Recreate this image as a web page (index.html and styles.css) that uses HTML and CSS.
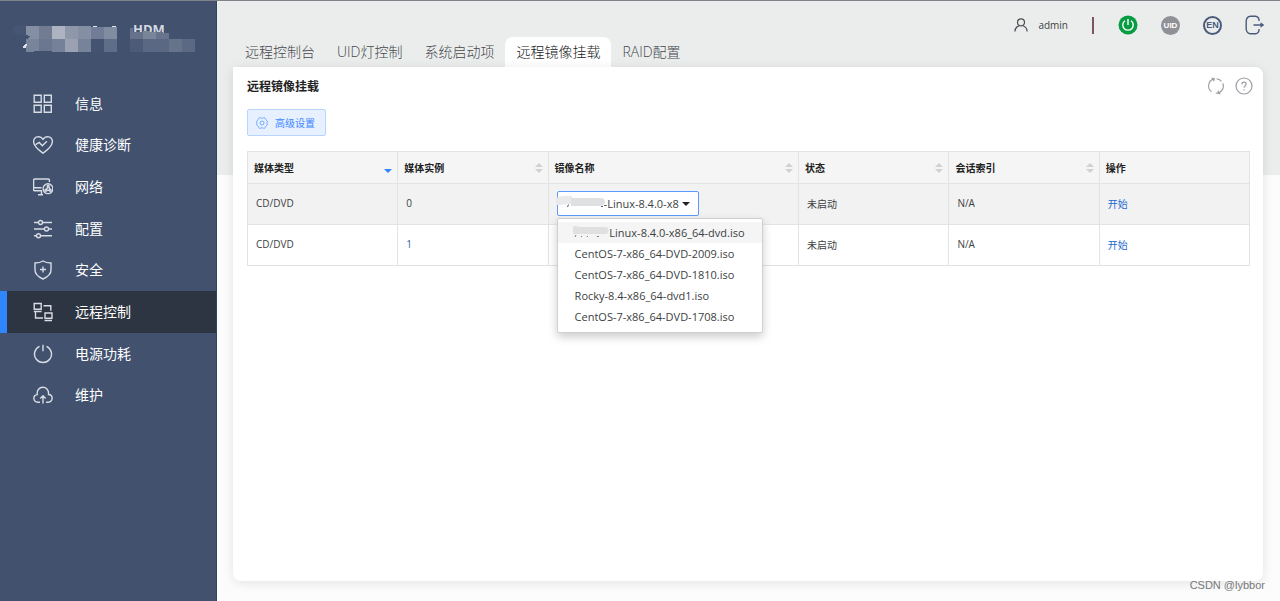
FILE: index.html
```
<!DOCTYPE html>
<html lang="zh-CN">
<head>
<meta charset="utf-8">
<title>HDM - 远程镜像挂载</title>
<link rel="stylesheet" href="styles.css">
</head>
<body>
<div class="app">
  <aside class="sidebar">
    <div class="brand">
      <span class="brand-name">HDM</span>
      <svg class="brand-mask" width="200" height="36" viewBox="0 20 200 36" shape-rendering="crispEdges" aria-hidden="true">
        <path fill="#465572" d="M13 26h13v10l-13-3z"/>
        <path fill="#858fa3" d="M26 26h13v13H28l2-3-4-1z"/><path fill="#717c93" d="M39 26h13v13H39z"/><path fill="#adb3c0" d="M52 26h13v13H52z"/><path fill="#8f98aa" d="M65 26h13v13H65z"/><path fill="#848fa3" d="M78 26h13v13H78z"/><path fill="#717d96" d="M91 27h13v12H91z"/><path fill="#818ca1" d="M104 27h13v12h-13z"/>
        <path fill="#78849a" d="M26 39h13v12h-4l-3 1h-6z"/><path fill="#6b7790" d="M39 39h13v12H39z"/><path fill="#758198" d="M52 39h13v13H52z"/><path fill="#99a1b2" d="M65 39h13v13H65z"/><path fill="#77839a" d="M78 39h13v13H78z"/><path fill="#445371" d="M91 39h13v13H91z"/><path fill="#606d88" d="M104 39h13v13h-13z"/>
        <path fill="#415170" d="M130 33h39v6h-39z"/>
        <path fill="#66728a" d="M130 28h3v4h10v7h-13z"/><path fill="#7b8599" d="M143 31l13 1v7h-13z"/><path fill="#68748d" d="M156 32l13 1v6h-13z"/>
        <path fill="#4d5b78" d="M130 39h13v13h-13z"/><path fill="#5a6883" d="M143 39h26v13h-26z"/><path fill="#66738b" d="M169 39h13v13h-13z"/><path fill="#5c6984" d="M182 39h13v13h-13z"/>
        <path fill="#dfe3ea" d="M93 26h4v1h-4zM112 26h4v1h-4zM25 44h2v2h-1v2h-3v-2z"/>
      </svg>
    </div>
    <nav class="nav" aria-label="主导航">
      <a class="nav-item" href="#"><svg class="nav-icon" viewBox="0 0 20 20"><path d="M1.200 1.200h7v7h-7zM11.300 1.200h7v7h-7zM1.200 11.200h7v7h-7zM11.300 11.200h7v7h-7z"/></svg>信息</a>
      <a class="nav-item" href="#"><svg class="nav-icon" viewBox="0 0 20 20"><path d="M10 18.200C6.500 15.600 .6 11.400 .6 6.700.6 1.500 7.200-.1 10 4.300c2.800-4.400 9.400-2.800 9.400 2.400 0 4.700-5.900 8.900-9.400 11.500zM2.600 9.600l3.600-2.200 3.100 3.300 4.600-4.500"/></svg>健康诊断</a>
      <a class="nav-item" href="#"><svg class="nav-icon" viewBox="0 0 20 20"><path d="M9 13.800H1.600a1 1 0 0 1-1-1V3a1 1 0 0 1 1-1h13.800a1 1 0 0 1 1 1v2M.6 10.700h8M8.500 14v3.500M5 17.800h5"/><circle cx="15" cy="11.700" r="4.900"/><circle cx="15.200" cy="9.200" r="1"/><circle cx="12.900" cy="13.200" r="1"/><circle cx="17.200" cy="13.200" r="1"/><path d="M14.800 10.200l-1.400 2.200M15.700 10.200l1.200 2.200M13.900 13.400h2.300"/></svg>网络</a>
      <a class="nav-item" href="#"><svg class="nav-icon" viewBox="0 0 20 20"><path d="M1 3.500h4.500M9.500 3.500H19M1 10h10.500M15.500 10H19M1 16.800h2.500M7.500 16.800H19"/><circle cx="7.500" cy="3.500" r="2"/><circle cx="13.500" cy="10" r="2"/><circle cx="5.500" cy="16.800" r="2"/></svg>配置</a>
      <a class="nav-item" href="#"><svg class="nav-icon" viewBox="0 0 20 20"><path d="M10 1c2.300 1.500 5 2 8 2v7c0 4-3.500 7-8 9-4.500-2-8-5-8-9V3c3 0 5.700-.5 8-2zM10 6.500v6M7 9.500h6"/></svg>安全</a>
      <a class="nav-item active" href="#" aria-current="page"><svg class="nav-icon" viewBox="0 0 20 20"><path d="M1.200 1.500h7v5.800h-7zM.8 9.500h7.800M10.500 3.700h7.300v5M2.500 9.500v6.500h7.500M12 11h7v5.200h-7zM11.500 18.500H19"/></svg>远程控制</a>
      <a class="nav-item" href="#"><svg class="nav-icon" viewBox="0 0 20 20"><path d="M6.500 2.300a8.500 8.500 0 1 0 7 0M10 .8v6.500"/></svg>电源功耗</a>
      <a class="nav-item" href="#"><svg class="nav-icon" viewBox="0 0 20 20"><path d="M7 17.300H4.800C-.2 16.800-.5 10.300 4.300 9.600 2.800.3 16.500-.5 15.500 9.500c5 .3 4.700 7.300-.2 7.800H13M10 18.500v-7.200M7.300 13.500l2.700-2.700 2.700 2.700"/></svg>维护</a>
    </nav>
  </aside>

  <main class="main">
    <header class="topbar">
      <nav class="tabs" aria-label="远程控制">
        <a class="tab" href="#">远程控制台</a>
        <a class="tab" href="#">UID灯控制</a>
        <a class="tab" href="#">系统启动项</a>
        <a class="tab selected" href="#" aria-current="page">远程镜像挂载</a>
        <a class="tab" href="#">RAID配置</a>
      </nav>
      <div class="tools">
        <a class="user" href="#">
          <svg width="14" height="14" viewBox="0 0 14 14" fill="none" stroke="#4a4d52" stroke-width="1.200"><circle cx="7" cy="4.300" r="3.500"/><path d="M.9 13.600c0-3 1.700-5 4.300-5.900M13.100 13.600c0-3-1.700-5-4.300-5.900"/></svg>
          admin
        </a>
        <span class="divider"></span>
        <button class="tool" type="button" aria-label="电源"><svg width="20" height="20" viewBox="0 0 20 20"><circle cx="10" cy="10" r="9.500" fill="#079c41"/><path d="M7 5.700a5.200 5.200 0 1 0 6 0M10 4v6" fill="none" stroke="#fff" stroke-width="1.400"/></svg></button>
        <button class="tool badge uid" type="button">UID</button>
        <button class="tool badge lang" type="button">EN</button>
        <button class="tool" type="button" aria-label="退出"><svg width="20" height="20" viewBox="0 0 20 20" fill="none" stroke="#4b5b7c" stroke-width="1.400"><path d="M14 6V4.500Q13.500 1.500 10.500 1.200H5.500Q1.500 1.500 1.200 6v8q.3 4.300 4.300 4.800h5q3-.3 3.500-3.300V14M8.500 10H17"/><path d="M15.500 7.200l3.800 2.800-3.800 2.800z" fill="#4b5b7c" stroke="none"/></svg></button>
      </div>
    </header>

    <section class="panel">
      <div class="panel-head">
        <h1 class="title">远程镜像挂载</h1>
        <div class="panel-actions">
          <button class="tool" type="button" aria-label="刷新"><svg width="18" height="18" viewBox="0 0 18 18" fill="none" stroke="#9a9da3" stroke-width="1.100"><path d="M6.800 1.900A7.300 7.300 0 0 0 4.500 14.700M8.800 16.300A7.300 7.300 0 0 0 15.800 6.200M9.500 1.700a7.300 7.300 0 0 1 5 2.600M4.800 1.100l2.600.7-.9 2.500M13.300 16.900l-2.600-.7.900-2.500"/></svg></button>
          <button class="tool" type="button" aria-label="帮助"><svg width="18" height="18" viewBox="0 0 18 18" fill="none" stroke="#9a9da3" stroke-width="1.200"><circle cx="9" cy="9" r="8"/><path d="M6.900 7.200C6.900 4.300 11.200 4.400 11.200 7 11.200 8.700 9 8.700 9 10.700M9 12.200v1.300"/></svg></button>
        </div>
      </div>
      <button class="advanced" type="button"><svg width="12" height="12" viewBox="0 0 12 12" fill="none" stroke="#77adff" stroke-width="1"><path d="M3.300.7h1.200L6 1.400 7.500.7h1.200l1 1.900 1.400 1.200.4 1.200-.8 1 .8 1-.4 1.200-1.400 1.200-1 1.900H7.500L6 10.600l-1.500.7H3.300l-1-1.900L.9 8.200.5 7l.8-1-.8-1 .4-1.200 1.400-1.200z"/><circle cx="6" cy="6" r="2"/></svg>高级设置</button>

      <table class="grid">
        <thead>
          <tr>
            <th scope="col"><div class="th">媒体类型<span class="sort desc"></span></div></th>
            <th scope="col"><div class="th">媒体实例<span class="sort"></span></div></th>
            <th scope="col" class="wide"><div class="th">镜像名称<span class="sort"></span></div></th>
            <th scope="col"><div class="th">状态<span class="sort"></span></div></th>
            <th scope="col"><div class="th">会话索引<span class="sort"></span></div></th>
            <th scope="col"><div class="th">操作</div></th>
          </tr>
        </thead>
        <tbody>
          <tr class="current">
            <td>CD/DVD</td>
            <td>0</td>
            <td>
              <div class="picker">
                <select class="image-select open" aria-label="镜像名称 0"><option>-Linux-8.4.0-x8</option></select>
                <svg class="smudge" width="50" height="16" viewBox="0 0 50 16" aria-hidden="true"><path fill="#e9eaeb" d="M0 3q6-3 16-2v8l-16 1z"/><path fill="#dfe0e1" d="M15 3h29q5 0 5 4-1 4-6 4H15z"/><path stroke="#55585c" d="M11.500 12l1-2.500M45 11.500h2" fill="none"/></svg>
                <ul class="menu" role="listbox" aria-label="镜像名称">
                  <li class="option hover" role="option" aria-selected="true"><svg class="redacted" width="37" height="12" viewBox="0 0 37 12" aria-hidden="true"><path fill="#e0e0e1" d="M0 1q2-2 6 0h28q4 3 0 7H0z"/><path stroke="#777" fill="none" d="M2 11l1-2M8 10.500h1M14 10.500h1M24 10.500h2"/></svg>Linux-8.4.0-x86_64-dvd.iso</li>
                  <li class="option" role="option">CentOS-7-x86_64-DVD-2009.iso</li>
                  <li class="option" role="option">CentOS-7-x86_64-DVD-1810.iso</li>
                  <li class="option" role="option">Rocky-8.4-x86_64-dvd1.iso</li>
                  <li class="option" role="option">CentOS-7-x86_64-DVD-1708.iso</li>
                </ul>
              </div>
            </td>
            <td>未启动</td>
            <td>N/A</td>
            <td><a class="action" href="#">开始</a></td>
          </tr>
          <tr>
            <td>CD/DVD</td>
            <td class="instance">1</td>
            <td><div class="picker"><select class="image-select" aria-label="镜像名称 1"><option></option></select></div></td>
            <td>未启动</td>
            <td>N/A</td>
            <td><a class="action" href="#">开始</a></td>
          </tr>
        </tbody>
      </table>
    </section>
    <span class="watermark">CSDN @lybbor</span>
  </main>
</div>
</body>
</html>
```
FILE: styles.css
```
* { box-sizing: border-box; }

body {
  margin: 0;
  font-family: "Open Sans", "Noto Sans CJK SC", sans-serif;
  font-size: 10px;
  color: #3c3f43;
}

a { color: inherit; text-decoration: none; }
button { font: inherit; cursor: pointer; }

.app {
  display: flex;
  min-height: 100vh;
  border-top: 1px solid #7f8288;
}

.sidebar {
  flex: 0 0 217px;
  background: #41516e;
  border-right: 1px solid #33435f;
}

.brand { position: relative; height: 82px; }
.brand-name {
  position: absolute;
  left: 133px;
  top: 19px;
  font-size: 13px;
  line-height: 18px;
  font-weight: 700;
  color: #d5d9e0;
}
.brand-mask { position: absolute; left: 0; top: 19px; }

.nav {
  display: grid;
  grid-template-rows: repeat(8, 1fr);
  height: 333px;
}
.nav-item {
  display: flex;
  align-items: center;
  gap: 22px;
  padding-left: 33px;
  font-size: 14px;
  line-height: 20px;
  color: #fff;
}
.nav-item.active {
  padding-left: 26px;
  background: #2e3542;
  border-left: 7px solid #2f86ff;
}
.nav-icon {
  width: 20px;
  height: 20px;
  fill: none;
  stroke: #d8dce4;
  stroke-width: 1.4;
}

.main {
  position: relative;
  flex: 1;
  min-width: 0;
  display: flex;
  flex-direction: column;
  padding: 0 17px 20px 16px;
  background: linear-gradient(#ebeded 174px, #fcfcfc 174px);
}

.topbar {
  display: flex;
  justify-content: space-between;
  align-items: flex-start;
  height: 66px;
}
.tabs {
  display: flex;
  align-self: flex-end;
  padding-left: 1px;
}
.tab {
  padding: 5px 11px;
  border-radius: 8px 8px 0 0;
  font-size: 14px;
  line-height: 20px;
  font-weight: 300;
  color: #45484c;
}
.tab.selected { background: #fff; color: #222; }

.tools {
  display: flex;
  align-items: center;
  gap: 23px;
  margin-right: -2px;
  padding-top: 14px;
}
.user {
  display: flex;
  align-items: center;
  gap: 10px;
  font-size: 10px;
  line-height: 20px;
}
.divider { width: 2px; height: 17px; margin: 0 1px; background: #7d5560; }
.tool {
  display: flex;
  align-items: center;
  justify-content: center;
  padding: 0;
  border: 0;
  background: none;
}
.badge {
  width: 19px;
  height: 19px;
  border-radius: 50%;
  font-family: "Liberation Sans", sans-serif;
  font-weight: 700;
}
.uid { background: #8f9196; color: #fff; font-size: 8px; }
.lang { border: 2px solid #4b5b7c; color: #4b5b7c; font-size: 9px; }

.panel {
  flex: 1;
  padding: 9px 13px 20px 14px;
  border-radius: 0 8px 8px 8px;
  background: #fff;
  box-shadow: 0 2px 12px rgba(0, 0, 0, 0.1);
}
.panel-head {
  display: flex;
  align-items: center;
  justify-content: space-between;
  height: 20px;
  margin-right: -3px;
}
.title {
  margin: 0;
  padding-top: 2px;
  font-size: 12px;
  line-height: 20px;
  font-weight: 700;
  color: #222;
}
.panel-actions { display: flex; gap: 10px; }

.advanced {
  display: flex;
  align-items: center;
  gap: 7px;
  height: 27px;
  margin: 13px 0 15px;
  padding: 0 10px 0 8px;
  border: 1px solid #b9d5ff;
  border-radius: 2px;
  background: #e6f0ff;
  color: #3d87ff;
}

.grid {
  width: 100%;
  table-layout: fixed;
  border-collapse: collapse;
}
.grid th, .grid td {
  width: 15%;
  border: 1px solid #e2e3e5;
  text-align: left;
}
.grid th {
  height: 32px;
  padding: 0 5px 0 6px;
  background: #f5f5f5;
  color: #222;
  font-weight: 700;
}
.grid th.wide { width: 25%; }
.th { display: flex; align-items: center; justify-content: space-between; }
.grid td { height: 41px; padding: 0 8px 2px; }
.current { background: #f2f2f2; }
.instance { color: #2a6496; }
.action { color: #1c68cf; }

.sort { display: grid; gap: 2px; }
.sort::before, .sort::after {
  content: "";
  border: 4px solid transparent;
}
.sort::before { border-top: 0; border-bottom-color: #d0d1d3; }
.sort::after { border-bottom: 0; border-top-color: #d0d1d3; }
.sort.desc::before { border-bottom-color: transparent; }
.sort.desc::after { border-top-color: #2f86ff; }

.picker { position: relative; width: 142px; }
.image-select {
  display: block;
  appearance: none;
  width: 142px;
  height: 25px;
  padding: 0 0 0 46px;
  border: 1px solid #c9cbce;
  border-radius: 2px;
  background: #fff;
  font: inherit;
  font-size: 11px;
  color: #3c3f43;
}
.image-select.open { border-color: #5b9bff; }
.picker::after {
  content: "";
  position: absolute;
  right: 9px;
  top: 11px;
  border: 4px solid transparent;
  border-top-color: #222;
  border-bottom: 0;
}
.smudge { position: absolute; left: -1px; top: 4px; }

.menu {
  position: absolute;
  z-index: 1;
  left: 0;
  top: 27px;
  width: 206px;
  margin: 0;
  padding: 3px 0 5px;
  list-style: none;
  border: 1px solid #cfd0d2;
  border-radius: 2px;
  background: #fff;
  box-shadow: 0 4px 10px rgba(0, 0, 0, 0.2);
}
.option {
  display: flex;
  align-items: center;
  padding: 0 17px;
  font-size: 11px;
  line-height: 21px;
  white-space: nowrap;
}
.option.hover { padding-left: 15px; background: #f5f5f5; }

.watermark {
  position: absolute;
  right: 15px;
  bottom: 8px;
  font-family: "Liberation Sans", sans-serif;
  font-size: 11px;
  line-height: 16px;
  color: #77797c;
}
```
